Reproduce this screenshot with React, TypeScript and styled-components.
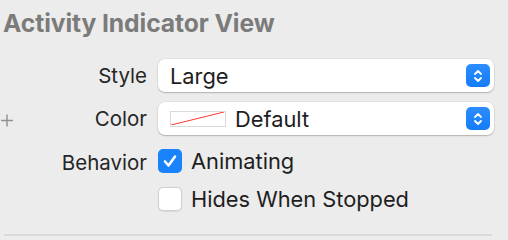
import styled, { createGlobalStyle } from "styled-components";

const GlobalStyle = createGlobalStyle`
  html, body {
    margin: 0;
    padding: 0;
    background: #ececec;
  }
  body {
    font-family: Inter, "Liberation Sans", sans-serif;
    -webkit-font-smoothing: antialiased;
  }
`;

const Panel = styled.div`
  width: 508px;
  height: 240px;
  box-sizing: border-box;
  background: #ececec;
  padding: 8px 14px 0 4px;
  position: relative;
`;

const Title = styled.h2`
  margin: 0 0 0 -1px;
  font-size: 24.7px;
  line-height: 30px;
  font-weight: 700;
  color: #7b7b7b;
  letter-spacing: -0.1px;
`;

const Form = styled.div`
  display: grid;
  grid-template-columns: 143px 1fr;
  column-gap: 11px;
  row-gap: 10px;
  margin-top: 21px;
  align-items: center;
`;

const Label = styled.div<{ $top?: boolean }>`
  text-align: right;
  font-size: 20.5px;
  color: #262626;
  align-self: ${(p) => (p.$top ? "start" : "center")};
  margin-top: ${(p) => (p.$top ? "5px" : "0")};
`;

const Gutter = styled.div`
  position: absolute;
  left: 0;
  top: 112px;
  width: 14px;
  height: 14px;
`;

const Select = styled.div`
  height: 33px;
  box-sizing: border-box;
  background: #fff;
  border-radius: 7px;
  box-shadow: 0 0 0 0.5px rgba(0, 0, 0, 0.08), 0 1px 1.5px rgba(0, 0, 0, 0.22);
  display: flex;
  align-items: center;
  padding: 0 4px 0 12px;
  gap: 9px;
  font-size: 21.8px;
  color: #1e1e1e;
`;

const SelectText = styled.span`
  flex: 1;
`;

const Stepper = styled.div`
  width: 24px;
  height: 23px;
  border-radius: 5px;
  background: linear-gradient(#2b8dff, #157cf8);
  display: flex;
  align-items: center;
  justify-content: center;
`;

const Swatch = styled.div`
  width: 56px;
  height: 16px;
  box-sizing: border-box;
  border: 1.5px solid #dadada;
  background: #fff;
  display: flex;
`;

const Checks = styled.div`
  display: flex;
  flex-direction: column;
  gap: 12px;
  margin-top: 3px;
`;

const CheckRow = styled.label`
  display: flex;
  align-items: center;
  gap: 9px;
  font-size: 21.8px;
  color: #1e1e1e;
`;

const Box = styled.span<{ $checked?: boolean }>`
  width: 24px;
  height: 24px;
  box-sizing: border-box;
  border-radius: 5px;
  display: flex;
  align-items: center;
  justify-content: center;
  background: ${(p) => (p.$checked ? "#1a82fb" : "#fff")};
  border: ${(p) => (p.$checked ? "none" : "1px solid #cfcfcf")};
  box-shadow: ${(p) =>
    p.$checked ? "none" : "0 0.5px 1px rgba(0,0,0,0.08)"};
`;

const Divider = styled.div`
  position: absolute;
  left: 4px;
  right: 16px;
  top: 234px;
  height: 2px;
  background: #d9d9d9;
`;

const Chevrons = () => (
  <svg width="12" height="16" viewBox="0 0 12 16">
    <path
      d="M3 6 L6 3 L9 6 M3 10 L6 13 L9 10"
      fill="none"
      stroke="#fff"
      strokeWidth="1.8"
      strokeLinecap="round"
      strokeLinejoin="round"
    />
  </svg>
);

const Check = () => (
  <svg width="18" height="18" viewBox="0 0 18 18">
    <path
      d="M4 9.5 L7.5 13.5 L14 4.5"
      fill="none"
      stroke="#fff"
      strokeWidth="2.6"
      strokeLinecap="round"
      strokeLinejoin="round"
    />
  </svg>
);

const Plus = () => (
  <svg width="14" height="14" viewBox="0 0 14 14">
    <path d="M1 6.5 H13 M7 0.5 V12.5" stroke="#8f8f8f" strokeWidth="1.4" />
  </svg>
);

const App = () => {
  return (
    <>
      <GlobalStyle />
      <Panel>
        <Title>Activity Indicator View</Title>
        <Form>
          <Label>Style</Label>
          <Select>
            <SelectText>Large</SelectText>
            <Stepper>
              <Chevrons />
            </Stepper>
          </Select>

          <Label>Color</Label>
          <Select>
            <Swatch>
              <svg width="53" height="13" viewBox="0 0 53 13">
                <line x1="0" y1="13" x2="53" y2="0" stroke="#ff3b30" strokeWidth="1" />
              </svg>
            </Swatch>
            <SelectText>Default</SelectText>
            <Stepper>
              <Chevrons />
            </Stepper>
          </Select>

          <Label $top>Behavior</Label>
          <Checks>
            <CheckRow>
              <Box $checked>
                <Check />
              </Box>
              Animating
            </CheckRow>
            <CheckRow>
              <Box />
              Hides When Stopped
            </CheckRow>
          </Checks>
        </Form>
        <Gutter>
          <Plus />
        </Gutter>
        <Divider />
      </Panel>
    </>
  );
};

export default App;
